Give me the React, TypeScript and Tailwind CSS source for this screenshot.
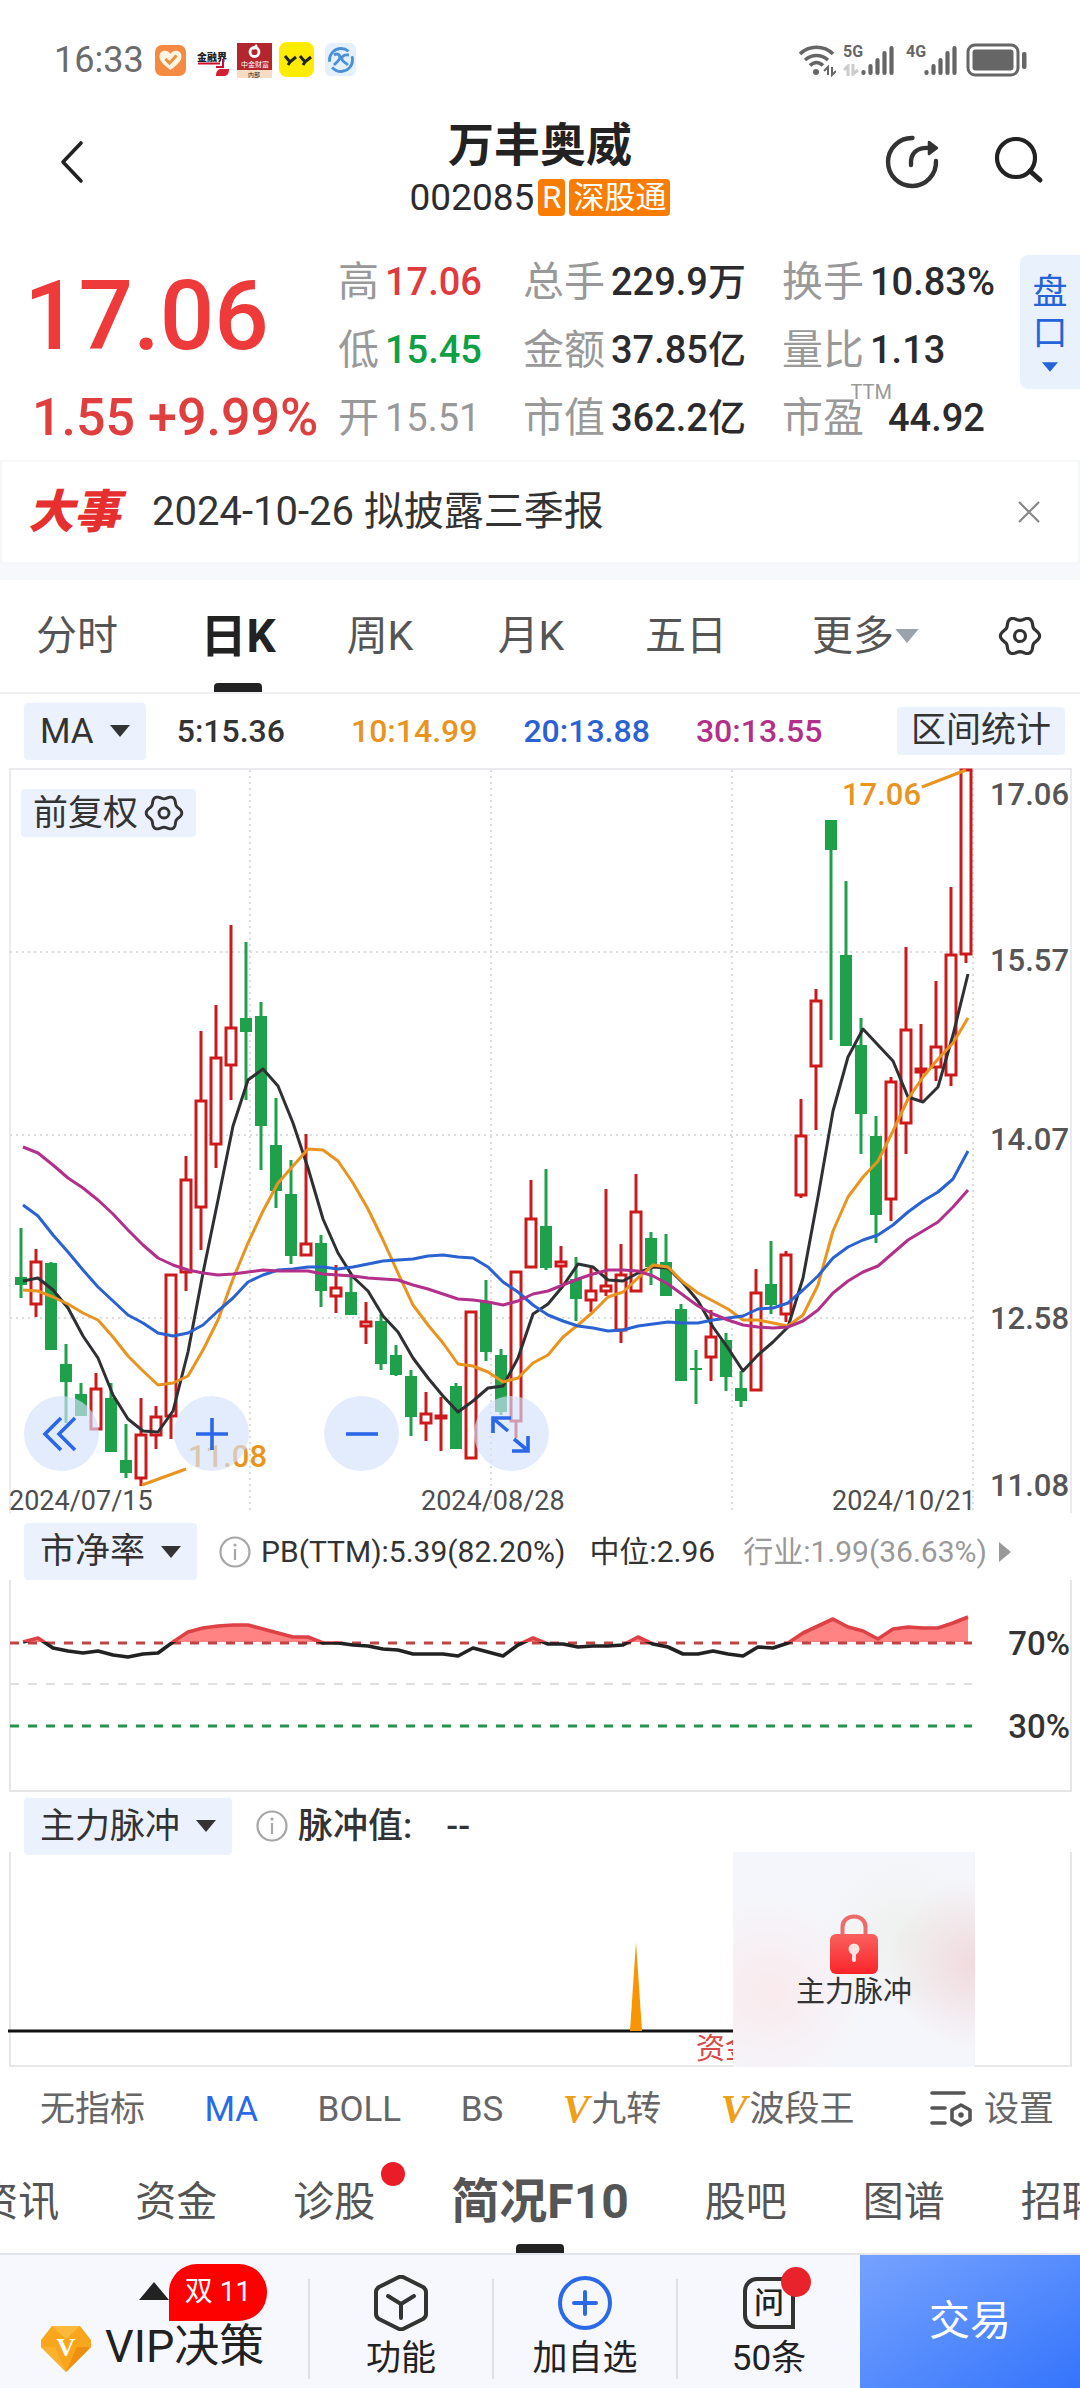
import type { ReactNode } from 'react'

type Candle = [high: number, top: number, bottom: number, low: number, up: 0 | 1]

const candles: Candle[] = [
  [1228, 1277, 1285, 1298, 0], [1249, 1261, 1305, 1317, 1], [1262, 1263, 1350, 1350, 0], [1344, 1364, 1382, 1423, 0],
  [1383, 1394, 1416, 1416, 0], [1373, 1388, 1430, 1430, 1], [1383, 1398, 1452, 1452, 0], [1424, 1460, 1473, 1478, 0],
  [1398, 1434, 1479, 1486, 1], [1406, 1416, 1436, 1449, 1], [1274, 1274, 1417, 1439, 1], [1156, 1179, 1273, 1291, 1],
  [1031, 1100, 1208, 1250, 1], [1005, 1057, 1145, 1168, 1], [925, 1027, 1066, 1100, 1], [942, 1018, 1032, 1100, 0],
  [1002, 1016, 1126, 1170, 0], [1098, 1145, 1191, 1208, 0], [1160, 1194, 1256, 1264, 0], [1134, 1243, 1256, 1256, 1],
  [1235, 1243, 1291, 1307, 0], [1265, 1287, 1297, 1313, 1], [1277, 1292, 1315, 1315, 0], [1302, 1321, 1327, 1344, 1],
  [1314, 1321, 1364, 1370, 0], [1345, 1355, 1375, 1376, 0], [1370, 1376, 1417, 1436, 0], [1392, 1413, 1424, 1441, 1],
  [1397, 1415, 1418, 1451, 1], [1383, 1386, 1449, 1449, 0], [1311, 1311, 1459, 1459, 1], [1280, 1301, 1352, 1361, 0],
  [1349, 1355, 1412, 1415, 0], [1271, 1271, 1422, 1438, 1], [1180, 1218, 1268, 1268, 1], [1169, 1226, 1268, 1270, 0],
  [1246, 1261, 1267, 1284, 1], [1257, 1279, 1299, 1321, 0], [1268, 1290, 1301, 1312, 1], [1189, 1285, 1292, 1296, 1],
  [1244, 1274, 1331, 1343, 1], [1174, 1211, 1292, 1292, 1], [1232, 1238, 1267, 1285, 0], [1234, 1262, 1296, 1296, 0],
  [1304, 1309, 1381, 1381, 0], [1350, 1368, 1370, 1404, 0], [1310, 1336, 1358, 1381, 1], [1333, 1340, 1377, 1391, 0],
  [1371, 1388, 1401, 1407, 0], [1269, 1292, 1391, 1391, 1], [1241, 1284, 1305, 1314, 0], [1251, 1254, 1315, 1322, 1],
  [1099, 1135, 1196, 1198, 1], [989, 1000, 1067, 1130, 1], [820, 820, 850, 1040, 0], [881, 955, 1046, 1046, 0],
  [1018, 1045, 1114, 1154, 0], [1116, 1136, 1215, 1243, 0], [1077, 1081, 1200, 1221, 1], [947, 1029, 1124, 1154, 1],
  [1024, 1068, 1073, 1102, 1], [981, 1046, 1068, 1081, 1], [887, 954, 1076, 1086, 1], [769, 769, 955, 963, 1],
]

const averages = [
  {
    color: '#2f3033',
    ys: [1281, 1278, 1290, 1308, 1336, 1358, 1395, 1419, 1431, 1432, 1411, 1352, 1273, 1200, 1126, 1080, 1069, 1086, 1123, 1168, 1219, 1253, 1277, 1291, 1316, 1332, 1358, 1378, 1396, 1412, 1401, 1388, 1386, 1358, 1314, 1304, 1286, 1264, 1267, 1280, 1281, 1273, 1267, 1268, 1283, 1301, 1327, 1348, 1371, 1355, 1342, 1327, 1278, 1197, 1111, 1057, 1029, 1045, 1061, 1097, 1102, 1087, 1035, 974],
  },
  {
    color: '#e8941f',
    ys: [1290, 1291, 1297, 1304, 1313, 1320, 1337, 1356, 1371, 1385, 1383, 1376, 1350, 1320, 1279, 1243, 1211, 1183, 1166, 1149, 1150, 1161, 1183, 1209, 1240, 1273, 1305, 1325, 1343, 1364, 1366, 1372, 1382, 1378, 1363, 1355, 1337, 1325, 1312, 1297, 1292, 1278, 1265, 1267, 1282, 1293, 1301, 1309, 1320, 1320, 1323, 1326, 1315, 1285, 1231, 1197, 1177, 1161, 1131, 1099, 1077, 1059, 1043, 1018],
  },
  {
    color: '#2a62d2',
    ys: [1205, 1216, 1235, 1252, 1270, 1287, 1301, 1315, 1323, 1333, 1336, 1333, 1325, 1311, 1298, 1282, 1275, 1270, 1269, 1267, 1267, 1269, 1267, 1264, 1261, 1260, 1259, 1256, 1255, 1257, 1258, 1267, 1282, 1292, 1305, 1315, 1321, 1326, 1328, 1331, 1330, 1326, 1324, 1322, 1323, 1323, 1320, 1318, 1316, 1309, 1308, 1303, 1290, 1276, 1258, 1247, 1240, 1235, 1225, 1212, 1201, 1192, 1179, 1151],
  },
  {
    color: '#b2308a',
    ys: [1147, 1153, 1165, 1178, 1188, 1200, 1214, 1230, 1245, 1258, 1265, 1270, 1273, 1275, 1274, 1272, 1270, 1271, 1271, 1271, 1274, 1275, 1276, 1278, 1279, 1280, 1285, 1289, 1294, 1299, 1300, 1302, 1305, 1301, 1294, 1291, 1285, 1279, 1274, 1270, 1270, 1271, 1276, 1284, 1295, 1306, 1314, 1320, 1325, 1327, 1328, 1327, 1321, 1310, 1293, 1281, 1272, 1266, 1253, 1240, 1231, 1222, 1207, 1190],
  },
]

const pbLine = [62, 58, 68, 71, 73, 71, 75, 77, 74, 73, 62, 52, 48, 46, 45, 45, 49, 53, 57, 57, 63, 63, 65, 66, 69, 70, 74, 74, 74, 76, 68, 72, 76, 65, 58, 64, 64, 67, 66, 66, 65, 57, 64, 67, 74, 74, 71, 74, 76, 67, 68, 63, 53, 46, 39, 47, 51, 59, 49, 47, 48, 48, 43, 37]

const toPoints = (ys: number[]) => ys.map((y, i) => `${23 + 15 * i},${y}`).join(' ')

// six-lobed outline for the settings gear
const gearPoints = Array.from({ length: 72 }, (_, i) => {
  const a = (i * Math.PI) / 36
  const r = 17.6 + 2 * Math.cos(6 * a)
  return `${(22 + r * Math.cos(a)).toFixed(1)},${(22 + r * Math.sin(a)).toFixed(1)}`
}).join(' ')

const quoteStats = [
  { label: '高', value: '17.06', color: 'text-[#e03a3e]' },
  { label: '总手', value: '229.9万', color: 'text-[#2b2b2e]' },
  { label: '换手', value: '10.83%', color: 'text-[#2b2b2e]' },
  { label: '低', value: '15.45', color: 'text-[#0fa046]' },
  { label: '金额', value: '37.85亿', color: 'text-[#2b2b2e]' },
  { label: '量比', value: '1.13', color: 'text-[#2b2b2e]' },
  { label: '开', value: '15.51', color: 'text-[#999999]' },
  { label: '市值', value: '362.2亿', color: 'text-[#2b2b2e]' },
  { label: '市盈', value: '44.92', color: 'text-[#2b2b2e]', sup: 'TTM' },
]

const periods = ['分时', '日K', '周K', '月K', '五日', '更多']

function Gear({ className }: { className: string }) {
  return (
    <svg viewBox="0 0 44 44" className={className} fill="none" stroke="currentColor" strokeWidth="3.2" strokeLinejoin="round">
      <polygon points={gearPoints} />
      <circle cx="22" cy="22" r="5.5" />
    </svg>
  )
}

function Caret({ className }: { className: string }) {
  return (
    <svg viewBox="0 0 20 12" className={className} fill="currentColor">
      <path d="M0 0h20L10 12z" />
    </svg>
  )
}

function Info() {
  return (
    <svg viewBox="0 0 32 32" className="size-8 shrink-0 text-[#a6a6a6]" fill="none" stroke="currentColor" strokeWidth="2.2">
      <circle cx="16" cy="16" r="14.5" />
      <path d="M16 13v11" />
      <circle cx="16" cy="9" r="1.6" fill="currentColor" stroke="none" />
    </svg>
  )
}

function Bars() {
  return (
    <svg viewBox="0 0 34 32" className="h-8 w-[34px]" stroke="#666" strokeWidth="4.2" strokeLinecap="round">
      <path d="M2.5 28v1M9.5 22v7M16.5 16v13M23.5 9v20M30.5 4v25" />
    </svg>
  )
}

function StatusBar() {
  return (
    <div className="flex h-20 items-end justify-between pl-[54px] pr-[52px]">
      <div className="flex h-10 items-center">
        <span className="mr-[10px] text-[36px] text-[#6b6b6b]">16:33</span>
        <svg viewBox="0 0 204 40" className="h-10 w-[204px]">
          <rect x="1" y="5" width="31" height="31" rx="7" fill="#f58a42" />
          <path d="M16.500 30C8 24 5.500 20 5.500 16.500c0-6.500 8-7.500 11-2.500 3-5 11-4 11 2.500 0 3.500-2.500 7.500-11 13.500z" fill="#fff5e2" />
          <path d="M11.500 19l4 4 7-7.500" fill="none" stroke="#e8923e" strokeWidth="3" />
          <text x="43" y="21" fontSize="10" fontWeight="900" fill="#222">金融界</text>
          <path d="M44 23.500h22M62 27h7v-8" stroke="#c8102e" strokeWidth="2" fill="none" />
          <path d="M62 36c0-5 2-7 5-7h8c0 5-2 7-5 7z" fill="#d21f33" />
          <rect x="83" y="3" width="35" height="35" fill="#b3262d" />
          <rect x="83" y="30" width="35" height="8" fill="#f8dcc4" />
          <circle cx="100.500" cy="12" r="4.500" fill="none" stroke="#fff" strokeWidth="2.800" />
          <path d="M99 9l4-4" stroke="#fff" strokeWidth="2.500" />
          <text x="87" y="27" fontSize="7" fill="#fff">中金财富</text>
          <text x="94" y="37" fontSize="6" fill="#222">内部</text>
          <rect x="125" y="2" width="35" height="35" rx="8" fill="#fdec00" />
          <path d="M131 16l5 6 6-5M136 22l-2 3M146 16l5 6 6-5M151 22l-2 3" stroke="#222" strokeWidth="3" fill="none" />
          <rect x="171" y="3" width="31" height="33" rx="6" fill="#e4f0fc" />
          <circle cx="187" cy="20" r="11.500" fill="none" stroke="#4b8fd6" strokeWidth="2.800" strokeDasharray="28 6" />
          <path d="M180 15c5-3 8 2 4 6l-4 4M195 15c-6-1-9 3-6 6l5 4" stroke="#4b8fd6" strokeWidth="2.800" fill="none" />
        </svg>
      </div>
      <div className="flex h-10 items-center">
        <svg viewBox="0 0 38 34" className="mr-[7px] h-[34px] w-[38px]" fill="none" stroke="#666" strokeWidth="3.600">
          <path d="M2 11c9-9 24-9 33 0M7 17c7-6 16-6 23 0M12 22.500c4-4 9-4 13 0" />
          <circle cx="18" cy="29" r="3" fill="#666" stroke="none" />
          <path d="M30 32v-8l-4 4M34 24v8l4-4" strokeWidth="2" />
        </svg>
        <div className="flex h-8 w-[18px] flex-col justify-between text-[16px] font-bold leading-4 text-[#666]">
          <span>5G</span>
          <svg viewBox="0 0 16 12" className="h-3 w-4" stroke="#ccc" strokeWidth="3" fill="none">
            <path d="M5 12V2L1 6M10 0v10l5-4" />
          </svg>
        </div>
        <Bars />
        <div className="ml-[11px] h-8 w-[18px] text-[16px] font-bold leading-4 text-[#666]">4G</div>
        <Bars />
        <svg viewBox="0 0 62 34" className="ml-2 h-[34px] w-[62px]">
          <rect x="2" y="2" width="50" height="30" rx="7" fill="none" stroke="#666" strokeWidth="3" />
          <rect x="6.500" y="6.500" width="41" height="21" rx="3" fill="#666" />
          <rect x="56" y="9" width="4.500" height="17" rx="2" fill="#666" />
        </svg>
      </div>
    </div>
  )
}

function Header() {
  return (
    <header className="grid h-[168px] grid-cols-[1fr_auto_1fr] pt-[37px]">
      <button aria-label="返回" className="flex h-[90px] items-center pl-[58px]">
        <svg viewBox="0 0 28 44" className="h-11 w-7" fill="none" stroke="#222" strokeWidth="3.600" strokeLinecap="round" strokeLinejoin="round">
          <path d="M23 3L5 22l18 19" />
        </svg>
      </button>
      <div className="flex flex-col items-center">
        <h1 className="h-[62px] text-[46px] font-bold leading-[56px] text-[#222]">万丰奥威</h1>
        <div className="flex h-[37px] items-center gap-1">
          <span className="text-[37px] text-[#2b2b2e]">002085</span>
          <span className="rounded bg-[#f97c05] px-1 text-[31px] leading-[37px] text-white">R</span>
          <span className="rounded bg-[#f97c05] px-1 text-[31px] leading-[37px] text-white">深股通</span>
        </div>
      </div>
      <div className="flex h-[90px] items-center justify-end gap-[54px] pr-9">
        <button aria-label="分享">
          <svg viewBox="0 0 56 56" className="size-14" fill="none" stroke="#333" strokeWidth="4.400" strokeLinecap="round">
            <path d="M28.500 4A24 24 0 1 0 52 27" />
            <path d="M27 31c-1-12 6-18 19-17" />
            <path d="M45 8l8 6-8 6z" fill="#333" strokeWidth="2.500" strokeLinejoin="round" />
          </svg>
        </button>
        <button aria-label="搜索">
          <svg viewBox="0 0 50 50" className="size-[50px]" fill="none" stroke="#222" strokeWidth="4.200" strokeLinecap="round">
            <circle cx="22" cy="21" r="19" />
            <path d="M36 34l10 9" strokeWidth="5" />
          </svg>
        </button>
      </div>
    </header>
  )
}

function Quote() {
  return (
    <section className="grid grid-cols-[338fr_682fr_60fr]">
      <div className="flex flex-col whitespace-nowrap">
        <div className="flex h-[136px] items-center pl-6 text-[96px] font-medium leading-none text-[#ee3a3a]">17.06</div>
        <div className="flex h-[68px] items-center pl-8 text-[52px] font-medium leading-none text-[#e03f40]">1.55 +9.99%</div>
      </div>
      <dl className="grid grid-cols-[185fr_259fr_238fr]">
        {quoteStats.map((s) => (
          <div key={s.label} className="flex h-[68px] items-center gap-[6px] whitespace-nowrap text-[38px]">
            <dt className="relative text-[41px] text-[#999]">
              {s.label}
              {s.sup && <span className="absolute -right-7 -top-4 text-[20px] leading-5">{s.sup}</span>}
            </dt>
            <dd className={`${s.color} ${s.value === '15.51' ? 'font-normal' : 'font-medium'} ${s.sup ? 'pl-[18px]' : ''}`}>{s.value}</dd>
          </div>
        ))}
      </dl>
      <button className="mt-[7px] flex h-[134px] flex-col items-center justify-center rounded-l-lg bg-[#e9f1fd] text-[35px] leading-[41px] text-[#2563d9]">
        <span>盘</span>
        <span>口</span>
        <Caret className="mt-2 h-[10px] w-4" />
      </button>
    </section>
  )
}

function Notice() {
  return (
    <section className="mt-2 border-b-[18px] border-[#f6f8fc]">
      <div className="flex h-[102px] items-center border-x-2 border-t-2 border-[#f6f7f9] pl-[26px] pr-[38px]">
        <b className="text-[46px] font-black italic text-[#e6302f]">大事</b>
        <p className="ml-8 flex-1 text-[40px] text-[#333]">2024-10-26 拟披露三季报</p>
        <button aria-label="关闭">
          <svg viewBox="0 0 22 22" className="size-[22px]" stroke="#888" strokeWidth="2.200">
            <path d="M1 1l20 20M21 1L1 21" />
          </svg>
        </button>
      </div>
    </section>
  )
}

function PeriodTabs() {
  return (
    <nav className="grid h-[114px] grid-cols-[154fr_168fr_116fr_186fr_124fr_236fr_72fr_24fr] border-b-2 border-[#eef0f3]">
      {periods.map((p) => (
        <button
          key={p}
          className={`relative flex items-center justify-center whitespace-nowrap ${p === '日K' ? 'text-[46px] font-bold text-[#222]' : 'text-[41px] text-[#555]'}`}
        >
          {p}
          {p === '更多' && <Caret className="h-[14px] w-[26px] text-[#9aa3ab]" />}
          {p === '日K' && <span className="absolute bottom-0 h-[9px] w-12 rounded-t bg-[#222]" />}
        </button>
      ))}
      <button aria-label="图表设置" className="flex items-center justify-center text-[#333]">
        <Gear className="size-11" />
      </button>
    </nav>
  )
}

function Picker({ children }: { children: ReactNode }) {
  return (
    <button className="flex h-[57px] items-center gap-4 whitespace-nowrap rounded-sm bg-[#ebf2fd] px-4 text-[35px] text-[#333]">
      {children}
      <Caret className="h-3 w-5" />
    </button>
  )
}

function MaLegend() {
  return (
    <div className="flex h-[74px] items-center pl-6 pr-[15px] text-[32px]">
      <Picker>MA</Picker>
      <div className="ml-[31px] flex gap-[46px] font-medium">
        <span className="mr-5 text-[#333]">5:15.36</span>
        <span className="text-[#e8941f]">10:14.99</span>
        <span className="text-[#2a62d2]">20:13.88</span>
        <span className="text-[#b2308a]">30:13.55</span>
      </div>
      <button className="ml-auto rounded-sm bg-[#ebf2fd] px-[14px] text-[35px] leading-[48px] text-[#333]">区间统计</button>
    </div>
  )
}

function CandleChart() {
  return (
    <div className="relative">
      <svg viewBox="0 768 1080 745" className="block w-full overflow-visible">
        <path d="M10 1513V769h1061v744" fill="none" stroke="#e9ebee" strokeWidth="2" />
        <g stroke="#dcdcdc" strokeWidth="2" strokeDasharray="2 4">
          <path d="M250 770v743M491 770v743M732 770v743M973 770v743" />
          <path d="M10 952h963M10 1135h963M10 1318h963" />
        </g>
        {candles.map(([high, top, bottom, low, up], i) => {
          const x = 21 + 15 * i
          return up ? (
            <g key={i} stroke="#cc1a1c" strokeWidth="3" fill="#fff">
              <path d={`M${x} ${high}V${top}M${x} ${bottom}V${low}`} />
              <rect x={x - 5} y={top + 1} width="10" height={Math.max(bottom - top - 2, 2)} />
            </g>
          ) : (
            <g key={i} fill="#1fa04b">
              <rect x={x - 1.5} y={high} width="3" height={low - high} />
              <rect x={x - 6} y={top} width="12" height={bottom - top} />
            </g>
          )
        })}
        {averages.map((a) => (
          <polyline key={a.color} points={toPoints(a.ys)} fill="none" stroke={a.color} strokeWidth="3" strokeLinejoin="round" />
        ))}
        <path d="M922 787l44-17M142 1485l44-16" stroke="#e8941f" strokeWidth="3" />
        <g fontSize="31" fontWeight="500" fill="#e8941f">
          <text x="842" y="805">17.06</text>
          <text x="188" y="1467">11.08</text>
        </g>
        <g fontSize="31" fontWeight="500" fill="#555" textAnchor="end">
          <text x="1069" y="805">17.06</text>
          <text x="1069" y="971">15.57</text>
          <text x="1069" y="1150">14.07</text>
          <text x="1069" y="1329">12.58</text>
          <text x="1069" y="1496">11.08</text>
        </g>
        <g fontSize="27" fill="#4d4d4d">
          <text x="9" y="1510">2024/07/15</text>
          <text x="421" y="1510">2024/08/28</text>
          <text x="832" y="1510">2024/10/21</text>
        </g>
      </svg>
      <button className="absolute left-[21px] top-[21px] flex h-12 items-center gap-[6px] rounded-sm bg-[#ebf2fd] px-3 text-[35px] text-[#333]">
        前复权
        <Gear className="size-10" />
      </button>
      <div className="absolute bottom-[42px] left-6 flex gap-[75px] text-[#2b67e8]">
        <ChartButton label="左移">
          <path d="M37 22L21 38l16 16M51 22L35 38l16 16" />
        </ChartButton>
        <ChartButton label="放大">
          <path d="M22 38h32M38 22v32" />
        </ChartButton>
        <ChartButton label="缩小">
          <path d="M22 38h32" />
        </ChartButton>
        <ChartButton label="全屏">
          <path d="M19 37V22h18M21 24l13 11M54 40v15H38M52 53L40 43" />
        </ChartButton>
      </div>
    </div>
  )
}

function ChartButton({ label, children }: { label: string; children: ReactNode }) {
  return (
    <button aria-label={label} className="rounded-full bg-[#d2e2fc]/65">
      <svg viewBox="0 0 75 75" className="size-[75px]" fill="none" stroke="currentColor" strokeWidth="3.600">
        {children}
      </svg>
    </button>
  )
}

function PbPanel() {
  return (
    <section>
      <div className="flex h-[67px] items-center whitespace-nowrap pl-6 pt-[10px] text-[30px] text-[#333]">
        <Picker>市净率</Picker>
        <div className="ml-[22px] flex items-center gap-[10px]">
          <Info />
          <span>PB(TTM):5.39(82.20%)</span>
        </div>
        <span className="ml-6">中位:2.96</span>
        <span className="ml-7 text-[#999]">行业:1.99(36.63%)</span>
        <svg viewBox="0 0 12 20" className="ml-3 h-5 w-3" fill="#999">
          <path d="M0 0v20l12-10z" />
        </svg>
      </div>
      <svg viewBox="0 0 1080 212" className="block w-full">
        <clipPath id="above"><rect width="1080" height="62" /></clipPath>
        <clipPath id="below"><rect y="62" width="1080" height="150" /></clipPath>
        <path d="M10 0v211h1061V0" fill="none" stroke="#e6e6e6" strokeWidth="2" />
        <g strokeDasharray="9 9" fill="none">
          <path d="M10 104h962" stroke="#e0e0e0" strokeWidth="2" />
          <path d="M10 146h962" stroke="#2b9150" strokeWidth="3" />
        </g>
        <polygon points={`23,63 ${toPoints(pbLine)} 968,63`} fill="#ff8383" clipPath="url(#above)" />
        <path d="M10 63h962" stroke="#c04444" strokeWidth="3" strokeDasharray="9 9" />
        <g fill="none" strokeWidth="3.600" strokeLinejoin="round">
          <polyline points={toPoints(pbLine)} stroke="#dd4145" clipPath="url(#above)" />
          <polyline points={toPoints(pbLine)} stroke="#222" clipPath="url(#below)" />
        </g>
        <g fontSize="33" fontWeight="500" fill="#333" textAnchor="end">
          <text x="1070" y="75">70%</text>
          <text x="1070" y="158">30%</text>
        </g>
      </svg>
    </section>
  )
}

function PulsePanel() {
  return (
    <section>
      <div className="flex h-[60px] items-center whitespace-nowrap pl-6 pt-2 text-[35px] text-[#333]">
        <Picker>主力脉冲</Picker>
        <div className="ml-6 flex items-center gap-[10px] font-medium">
          <Info />
          <span>脉冲值:</span>
          <span className="ml-6">--</span>
        </div>
      </div>
      <div className="relative">
        <svg viewBox="0 0 1080 215" className="block w-full">
          <path d="M10 0v214h1061V0" fill="none" stroke="#e6e6e6" strokeWidth="2" />
          <path d="M8 179h965" stroke="#111" strokeWidth="3" />
          <path d="M636 90l6 89h-12z" fill="#f99403" />
          <text x="696" y="207" fontSize="29" fill="#d84a4a">资金</text>
        </svg>
        <div className="absolute inset-y-0 left-[733px] flex w-[242px] flex-col items-center overflow-hidden bg-[radial-gradient(circle_at_100%_52%,#f0dadd_0%,transparent_32%),radial-gradient(circle_at_15%_65%,#f9eaed_0%,transparent_38%),radial-gradient(circle_at_70%_40%,#eef1ee_0%,transparent_40%)] bg-[#f5f6fb] pt-[62px]">
          <svg viewBox="0 0 48 60" className="h-[60px] w-12">
            <defs>
              <linearGradient id="lock" x1="0" y1="0" x2="0" y2="1">
                <stop offset="0" stopColor="#f9605f" />
                <stop offset="1" stopColor="#fb2429" />
              </linearGradient>
            </defs>
            <path d="M12.500 24V13c0-14 23-14 23 0v11" fill="none" stroke="#ee6b6b" strokeWidth="4" />
            <rect y="20" width="48" height="40" rx="6" fill="url(#lock)" />
            <circle cx="24" cy="35" r="5.500" fill="#ffe3e3" />
            <path d="M22 38h4v8a2 2 0 0 1-4 0z" fill="#ffe3e3" />
          </svg>
          <span className="text-[29px] leading-9 text-[#333]">主力脉冲</span>
        </div>
      </div>
    </section>
  )
}

function IndicatorRow() {
  return (
    <div className="flex h-[84px] items-center justify-between whitespace-nowrap pl-10 pr-[26px] text-[35px] text-[#666]">
      <button>无指标</button>
      <button className="text-[#2b6ae6]">MA</button>
      <button>BOLL</button>
      <button>BS</button>
      {['九转', '波段王'].map((name) => (
        <button key={name} className="flex items-center gap-[2px]">
          <b className="font-['Liberation_Serif',serif] text-[40px] italic text-[#efa019]">V</b>
          {name}
        </button>
      ))}
      <button className="ml-4 flex items-center gap-3">
        <svg viewBox="0 0 42 38" className="h-[38px] w-[42px]" fill="none" stroke="#555" strokeWidth="3.600" strokeLinecap="round">
          <path d="M2 3h32M2 18h13M2 33h13" />
          <path d="M31 15l9 5v10l-9 5-9-5V20z" strokeLinejoin="round" />
          <circle cx="31" cy="25" r="2" fill="#555" strokeWidth="1.500" />
        </svg>
        设置
      </button>
    </div>
  )
}

function SectionTabs() {
  return (
    <nav className="flex h-[102px] justify-center gap-[76px] overflow-hidden whitespace-nowrap text-[41px] text-[#555]">
      {['资讯', '资金', '诊股', '简况F10', '股吧', '图谱', '招聘'].map((name) => (
        <button key={name} className={`relative flex shrink-0 items-center justify-center ${name === '简况F10' ? 'text-[48px] font-bold' : ''}`}>
          {name}
          {name === '诊股' && <span className="absolute -right-[30px] top-[11px] size-6 rounded-full bg-[#ea1c27]" />}
          {name === '简况F10' && <span className="absolute bottom-0 h-[9px] w-12 rounded-t bg-[#222]" />}
        </button>
      ))}
    </nav>
  )
}

function BottomItem({ label, children }: { label: string; children: ReactNode }) {
  return (
    <button className="mb-[9px] mt-6 flex flex-col items-center gap-2 border-l-2 border-[#dfe0e5] text-[35px] leading-[40px] text-[#222]">
      {children}
      {label}
    </button>
  )
}

function BottomNav() {
  return (
    <footer className="grid h-[135px] grid-cols-[308fr_184fr_184fr_184fr_220fr] border-t-2 border-[#e4e5ea] bg-[#f7f8fd]">
      <button className="relative flex items-end gap-[14px] whitespace-nowrap pb-[15px] pl-[41px] text-[45px] leading-[52px] text-[#222]">
        <svg viewBox="0 0 50 48" className="h-12 w-[50px]">
          <path d="M11 1h28l11 14v7L25 47 0 22v-7z" fill="#f9a61c" />
          <path d="M11 1h28L25 14z" fill="#fbb93c" />
          <path d="M0 22h14l11 25z" fill="#fbb030" />
          <path d="M50 22H36L25 47z" fill="#ef8f12" />
          <text x="25" y="31" textAnchor="middle" fontSize="26" fontWeight="700" fill="#fff" fontFamily="Liberation Serif">V</text>
        </svg>
        VIP决策
        <svg viewBox="0 0 30 18" className="absolute left-[139px] top-[27px] h-[18px] w-[30px]" fill="#222">
          <path d="M15 0l15 18H0z" />
        </svg>
        <span className="absolute left-[169px] top-[9px] h-[57px] w-[98px] rounded-[28px] rounded-bl-none bg-[#fd0000] text-center text-[28px] leading-[56px] text-white">双 11</span>
      </button>
      <BottomItem label="功能">
        <svg viewBox="0 0 56 56" className="-mt-1 size-14" fill="none" stroke="#333" strokeWidth="4" strokeLinecap="round" strokeLinejoin="round">
          <path d="M25 2.500Q28 1 31 2.500L50 12q3 2 3 5v22q0 3-3 5L31 53.500Q28 55 25 53.500L6 44q-3-2-3-5V17q0-3 3-5z" />
          <path d="M15 21l13 8 13-8M28 29v14" />
        </svg>
      </BottomItem>
      <BottomItem label="加自选">
        <svg viewBox="0 0 56 56" className="-mt-1 size-14" fill="none" stroke="#2b6ae6" strokeWidth="4" strokeLinecap="round">
          <circle cx="28" cy="28" r="25" />
          <path d="M17 28h22M28 17v22" />
        </svg>
      </BottomItem>
      <BottomItem label="50条">
        <span className="relative -mt-1 h-14 w-[52px] pt-[2px]">
          <span className="flex h-[52px] items-center justify-center rounded-[14px] rounded-br-none border-4 border-[#333] text-[30px] font-medium">问</span>
          <span className="absolute -right-4 -top-2 size-[30px] rounded-full bg-[#e8232b]" />
        </span>
      </BottomItem>
      <button className="bg-linear-to-br from-[#76a2fe] to-[#3474fb] text-[41px] text-white">交易</button>
    </footer>
  )
}

export default function App() {
  return (
    <main className="w-full overflow-hidden bg-white font-['Roboto','Noto_Sans_CJK_SC',sans-serif] leading-none">
      <StatusBar />
      <Header />
      <Quote />
      <Notice />
      <PeriodTabs />
      <MaLegend />
      <CandleChart />
      <PbPanel />
      <PulsePanel />
      <IndicatorRow />
      <SectionTabs />
      <BottomNav />
    </main>
  )
}
